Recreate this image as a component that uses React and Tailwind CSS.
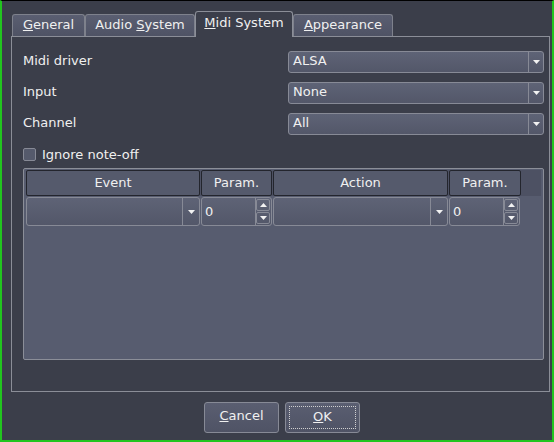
const font = { fontFamily: '"DejaVu Sans", "Liberation Sans", sans-serif' };

function Down() {
  return (
    <svg width="9" height="6" viewBox="0 0 9 6">
      <polygon points="1,1 8,1 4.5,5" fill="#f2f2f2" />
    </svg>
  );
}

function Up() {
  return (
    <svg width="9" height="6" viewBox="0 0 9 6">
      <polygon points="1,5 8,5 4.5,1" fill="#f2f2f2" />
    </svg>
  );
}

function Combo({ value, h = 'h-[22px]', btn = 'w-[15px]' }) {
  return (
    <div className={`flex ${h} rounded-[3px] border border-[#878a96] bg-gradient-to-b from-[#5e6376] to-[#535769]`}>
      <div className="flex flex-1 items-center pb-[2px] pl-[4px] text-[13px] text-[#f0f0f0]">{value}</div>
      <div className={`flex ${btn} items-center justify-center border-l border-[#878a96]`}>
        <Down />
      </div>
    </div>
  );
}

function Spin() {
  return (
    <div className="flex h-[29px] w-[71px] rounded-[3px] border border-[#878a96] bg-gradient-to-b from-[#5e6376] to-[#535769]">
      <div className="flex flex-1 items-center pl-[3px] text-[13px] text-[#f0f0f0]">0</div>
      <div className="flex w-[16px] flex-col gap-px border-l border-[#878a96] py-px pr-px">
        <div className="flex flex-1 items-center justify-center rounded-[2px] border border-[#878a96]"><Up /></div>
        <div className="flex flex-1 items-center justify-center rounded-[2px] border border-[#878a96]"><Down /></div>
      </div>
    </div>
  );
}

function Tab({ children, active, w }) {
  if (active) {
    return (
      <div className={`relative z-10 -mb-px flex h-[26px] ${w} items-center justify-center rounded-t-[3px] border border-b-0 border-[#8b8e98] bg-[#3b3e4a] pb-[3px] text-[13px] text-[#f0f0f0]`}>
        {children}
      </div>
    );
  }
  return (
    <div className={`flex h-[22px] ${w} items-center justify-center rounded-t-[3px] border border-b-0 border-[#7e818c] bg-gradient-to-b from-[#5a5e71] to-[#4f5365] pb-[2px] text-[13px] text-[#f0f0f0]`}>
      {children}
    </div>
  );
}

function Head({ children, w }) {
  return (
    <div className={`flex h-[26px] ${w} items-center justify-center rounded-[2px] border border-[#23252d] bg-[#555a6c] pb-px text-[13px] text-[#f0f0f0]`}>
      {children}
    </div>
  );
}

export default function App() {
  return (
    <div style={font} className="flex h-[442px] w-[554px] flex-col border-t border-x-2 border-b-2 border-t-black border-x-[#22c51f] border-b-[#22c51f] bg-[#3b3e4a] text-[#f0f0f0]">
      {/* tabs */}
      <div className="ml-[10px] mt-[10px] flex items-end">
        <Tab w="w-[73px]"><span><u>G</u>eneral</span></Tab>
        <Tab w="w-[110px]"><span>Audio <u>S</u>ystem</span></Tab>
        <Tab w="w-[98px]" active><span><u>M</u>idi System</span></Tab>
        <Tab w="w-[100px]"><span><u>A</u>ppearance</span></Tab>
      </div>

      {/* panel */}
      <div className="ml-[9px] flex h-[356px] w-[539px] flex-col border border-[#8b8e98] pl-[11px] pr-[5px] pt-[14px]">
        <div className="flex flex-col gap-[9px]">
          {[['Midi driver', 'ALSA'], ['Input', 'None'], ['Channel', 'All']].map(([l, v]) => (
            <div key={l} className="flex h-[22px] items-center">
              <div className="flex-1 pb-[3px] text-[13px] leading-none">{l}</div>
              <div className="w-[256px]"><Combo value={v} /></div>
            </div>
          ))}
        </div>

        <div className="mt-[13px] flex h-[13px] items-center gap-[6px]">
          <div className="h-[13px] w-[13px] rounded-[2px] border border-[#878a96] bg-[#555a6c]" />
          <span className="text-[13px] leading-none">Ignore note-off</span>
        </div>

        {/* table */}
        <div className="mt-[7px] flex h-[192px] w-[521px] flex-col rounded-[2px] border border-[#8b8e98] bg-[#575c6f] px-[2px] pt-px">
          <div className="flex gap-px bg-[#4d5163]">
            <Head w="w-[174px]">Event</Head>
            <Head w="w-[71px]">Param.</Head>
            <Head w="w-[175px]">Action</Head>
            <Head w="w-[72px]">Param.</Head>
          </div>
          <div className="mt-px flex gap-px">
            <div className="w-[174px]"><Combo value="" h="h-[29px]" btn="w-[17px]" /></div>
            <Spin />
            <div className="w-[175px]"><Combo value="" h="h-[29px]" btn="w-[17px]" /></div>
            <Spin />
          </div>
        </div>
      </div>

      {/* buttons */}
      <div className="ml-[202px] mt-[10px] flex gap-[6px]">
        <div className="flex h-[31px] w-[75px] items-center justify-center rounded-[3px] border border-[#878a96] bg-gradient-to-b from-[#5a5e71] to-[#4f5365] pb-[3px] text-[13px]">
          <span><u>C</u>ancel</span>
        </div>
        <div className="flex h-[31px] w-[75px] items-center justify-center rounded-[3px] border border-[#878a96] bg-gradient-to-b from-[#5a5e71] to-[#4f5365] p-[3px] text-[13px]">
          <div className="flex h-full w-full items-center justify-center border border-dotted border-[#d0d0d0] pb-[2px]">
            <span><u>O</u>K</span>
          </div>
        </div>
      </div>
    </div>
  );
}
